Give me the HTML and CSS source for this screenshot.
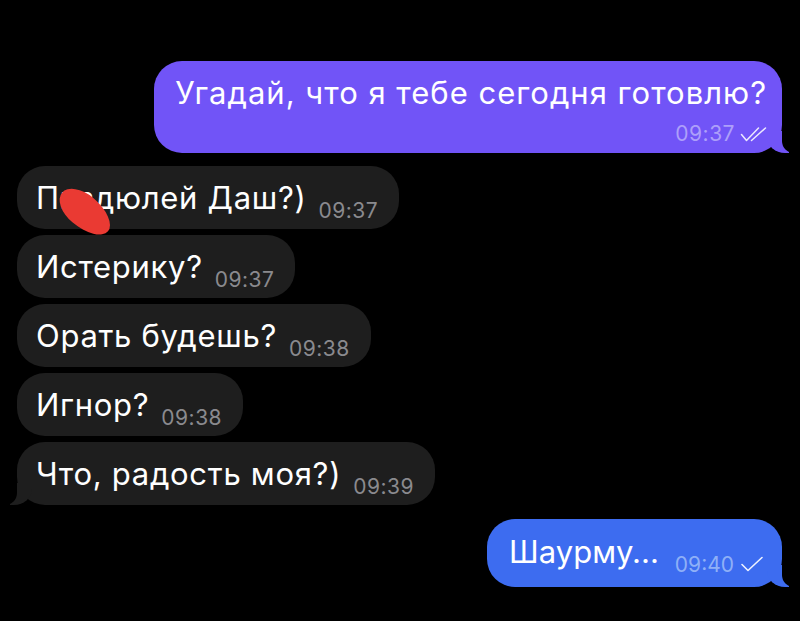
FILE: index.html
```html
<!DOCTYPE html>
<html lang="ru">
<head>
  <meta charset="UTF-8">
  <meta name="viewport" content="width=device-width, initial-scale=1.0">
  <title>Чат</title>
  <link rel="stylesheet" href="styles.css">
</head>
<body>

  <div class="chat">
    <div class="msg out purple tail-right">
      <div class="text">Угадай, что я тебе сегодня готовлю?</div>
      <div class="meta-line">
        <span class="time">09:37</span><svg class="check" width="27" height="15" viewBox="0 0 27 15"><path d="M1.5 7.5 L6.5 13.5 L18.5 1 M11.5 13.5 L25.5 1" fill="none" stroke="currentColor" stroke-width="1.5" stroke-linecap="round" stroke-linejoin="round"/></svg>
      </div>
    </div>

    <div class="msg in first">
      <span class="text">Пиздюлей Даш?)</span><span class="time">09:37</span>
      <span class="blot"></span>
    </div>
    <div class="msg in">
      <span class="text">Истерику?</span><span class="time">09:37</span>
    </div>
    <div class="msg in">
      <span class="text">Орать будешь?</span><span class="time">09:38</span>
    </div>
    <div class="msg in">
      <span class="text">Игнор?</span><span class="time">09:38</span>
    </div>
    <div class="msg in tail-left">
      <span class="text">Что, радость моя?)</span><span class="time">09:39</span>
    </div>

    <div class="msg out blue tail-right">
      <span class="text">Шаурму...</span><span class="time">09:40</span><svg class="check" width="22" height="16" viewBox="0 0 22 16"><path d="M1 8.5 L7 14.5 L21 1.5" fill="none" stroke="currentColor" stroke-width="1.6" stroke-linecap="round" stroke-linejoin="round"/></svg>
    </div>
  </div>

</body>
</html>
```

FILE: styles.css
```css
body {
  margin: 0;
  background: #000;
  font-family: Inter, "Noto Sans", sans-serif;
  color: #fff;
}
.chat {
  display: flex;
  flex-direction: column;
  padding: 61px 18px 0 17px;
}
.msg {
  position: relative;
  border-radius: 28px;
  font-size: 31px;
  line-height: 35px;
  letter-spacing: 0.7px;
  white-space: nowrap;
}
.in {
  align-self: flex-start;
  background: #1e1e1e;
  padding: 14px 21px 14px 19px;
  margin-top: 6px;
}
.in.first {
  margin-top: 13px;
}
.out {
  align-self: flex-end;
}
.purple {
  background: #7154f7;
  padding: 14px 15px 11px 21px;
  letter-spacing: 1px;
}
.blue {
  background: #3d6cf0;
  padding: 15px 19px 15px 22px;
  margin-top: 14px;
  letter-spacing: 0;
}
.time {
  font-size: 21px;
  line-height: 0;
  letter-spacing: 0.5px;
  color: #8a8a8e;
  vertical-align: -9px;
  margin-left: 12px;
}
.purple .time {
  color: #ad9ffa;
  vertical-align: 0;
}
.blue .time {
  color: #8fb0f7;
  margin-left: 16px;
  letter-spacing: 0;
}
.purple .check {
  color: #ece8fe;
  vertical-align: -1px;
  margin-left: 5px;
}
.blue .check {
  color: #eef2fe;
  vertical-align: -9px;
  margin-left: 7px;
}
.meta-line {
  text-align: right;
  line-height: 24px;
  margin-top: 8px;
}
.blot {
  position: absolute;
  left: 38px;
  top: 30px;
  width: 60px;
  height: 32px;
  background: #ea3a33;
  border-radius: 45% 55% 55% 45% / 50%;
  transform: rotate(40deg);
}
.tail-right::before,
.tail-right::after,
.tail-left::before,
.tail-left::after {
  content: "";
  position: absolute;
  bottom: 0;
  height: 22px;
}
.tail-right::before {
  right: -7px;
  width: 22px;
  border-bottom-left-radius: 18px 16px;
}
.purple::before { background: #7154f7; }
.blue::before { background: #3d6cf0; }
.tail-right::after {
  right: -12px;
  width: 12px;
  background: #000;
  border-bottom-left-radius: 12px;
}
.tail-left::before {
  left: -7px;
  width: 22px;
  background: #1e1e1e;
  border-bottom-right-radius: 18px 16px;
}
.tail-left::after {
  left: -12px;
  width: 12px;
  background: #000;
  border-bottom-right-radius: 12px;
}
```
